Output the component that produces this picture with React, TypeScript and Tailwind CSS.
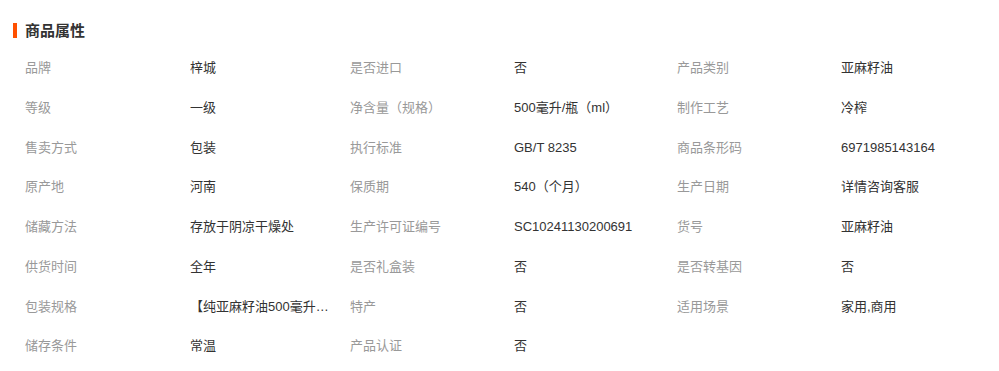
const rows: [string, string][][] = [
  [["品牌", "梓城"], ["是否进口", "否"], ["产品类别", "亚麻籽油"]],
  [["等级", "一级"], ["净含量（规格）", "500毫升/瓶（ml）"], ["制作工艺", "冷榨"]],
  [["售卖方式", "包装"], ["执行标准", "GB/T 8235"], ["商品条形码", "6971985143164"]],
  [["原产地", "河南"], ["保质期", "540（个月）"], ["生产日期", "详情咨询客服"]],
  [["储藏方法", "存放于阴凉干燥处"], ["生产许可证编号", "SC10241130200691"], ["货号", "亚麻籽油"]],
  [["供货时间", "全年"], ["是否礼盒装", "否"], ["是否转基因", "否"]],
  [["包装规格", "【纯亚麻籽油500毫升/瓶】"], ["特产", "否"], ["适用场景", "家用,商用"]],
  [["储存条件", "常温"], ["产品认证", "否"]],
];

const labelW = ["w-[165px]", "w-[164px]", "w-[164px]"];
const valueW = ["w-[160px]", "w-[163px]", "w-[150px]"];

export default function App() {
  return (
    <div className="w-[999px] h-[371px] bg-white font-['Liberation_Sans','Noto_Sans_CJK_SC',sans-serif] text-[13px] overflow-hidden">
      {/* 标题 */}
      <div className="flex items-center pt-[22px] pl-[13px] h-[39px]">
        <span className="w-[4px] h-[15px] bg-[#ff5000]" />
        <span className="ml-[8px] text-[15px] font-bold text-[#333] leading-none">商品属性</span>
      </div>

      {/* 属性表 */}
      <div className="pl-[25px] pt-[9px]">
        {rows.map((row, i) => (
          <div key={i} className="flex items-center h-[39.75px]">
            {row.map(([k, v], j) => (
              <div key={j} className="flex items-center">
                <span className={`${labelW[j]} text-[#999] whitespace-nowrap`}>{k}</span>
                <span className={`${valueW[j]} text-[#333] whitespace-nowrap overflow-hidden text-ellipsis pr-[18px]`}>{v}</span>
              </div>
            ))}
          </div>
        ))}
      </div>
    </div>
  );
}
